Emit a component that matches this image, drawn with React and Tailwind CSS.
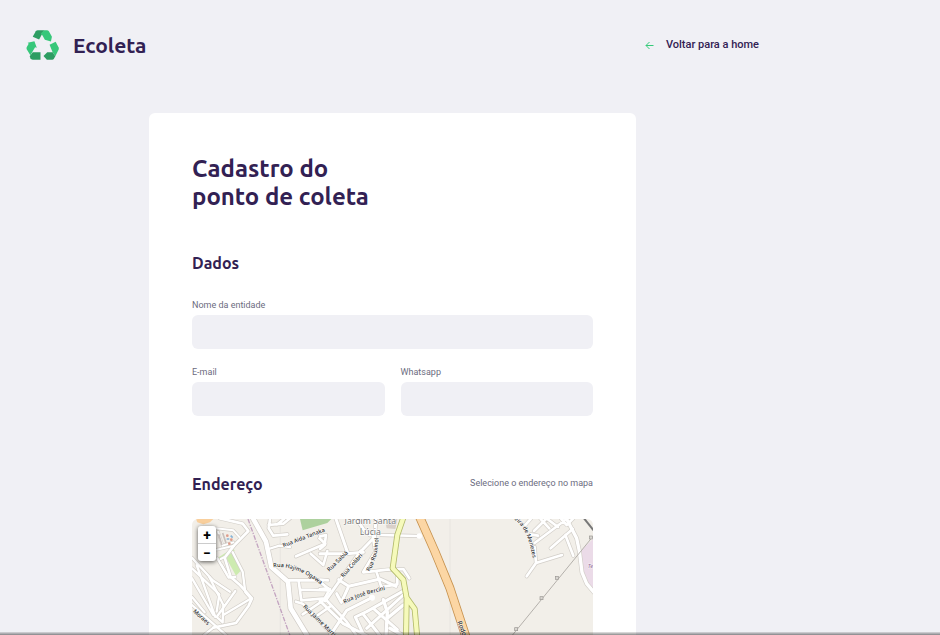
const casing = [
  // western district
  ["M90 10 L158 26 L175 48 L132 92 L104 128 L122 186 L150 210 L186 250 L176 272 L138 324 L70 338", 8],
  ["M128 112 L158 170 L166 232 L184 252", 7],
  ["M82 130 L116 188 L136 186", 7],
  ["M95 150 L110 176 M92 132 L104 126", 6],
  ["M78 40 L130 46 L148 66 M84 50 L98 92 L130 82 M80 104 L132 92", 6],
  ["M6 128 L68 196 L120 230 M6 160 L88 238 L80 290 M20 150 L76 306 M6 190 L70 300 M6 246 L44 292", 7],
  ["M58 186 L100 270 M136 228 L80 306 L98 322 M184 250 L100 300 M100 270 L98 322 M6 270 L110 362 M70 338 L40 362", 7],
  // centre
  ["M240 12 L236 40 L250 62 L292 58 M236 30 L280 26 L300 10 M262 28 L282 12", 8],
  ["M236 102 L268 92 L300 96", 7],
  ["M318 124 L406 86 L388 70 M362 116 L400 150 L412 108", 8],
  ["M292 196 L400 196 M326 198 L334 256 L404 250 L420 222 M330 224 L420 226 M390 200 L416 222", 8],
  ["M318 260 L338 266 L430 362 M338 298 L406 252 L470 320 L500 362 M384 300 L424 272", 8],
  ["M390 116 L470 116 L520 112 M474 116 L438 12 M510 112 L554 66 L558 12 M500 12 L524 48 L540 60", 9],
  ["M512 108 L406 258 M446 194 L476 214 L570 192 L618 214 M476 214 L454 262 L440 236", 9],
  ["M520 172 L592 164 L640 162 L658 190 M560 172 L574 216 L622 208 L622 184", 8],
  ["M548 62 L556 110 L520 170 M574 60 L680 63", 8],
  ["M390 64 L408 60 L404 90 L390 102 M390 194 L414 196 M390 222 L414 220", 8],
  ["M444 326 L470 286 L546 248 M390 258 L460 326 L530 362 M444 326 L420 362", 9],
  ["M496 306 L530 290 L640 228 M496 306 L522 362 M520 298 L570 362 M554 284 L622 344 M530 340 L640 240", 9],
  ["M580 254 L592 292 L588 362 M592 310 L640 270 M600 340 L640 362", 10],
  // east
  ["M1006 30 L1022 12 M1032 48 L1068 12 M1034 84 L1130 12 M1052 12 L1078 40 M1072 12 L1104 36 M1114 12 L1130 30 L1150 10", 8],
  ["M1082 100 L1148 42 M1126 60 L1150 122 M1022 58 L1044 62", 8],
  ["M1034 96 L1038 144 L1116 120 M1038 144 L1010 184", 8],
  ["M1130 12 L1160 70 L1168 108 L1176 172 L1190 206 L1212 232", 10],
];

const streetLabels = [
  { text: "Rua Aida Tanaka", path: "M281 97 Q340 74 420 44" },
  { text: "Rua Hajime Ogawa", path: "M250 157 Q320 150 396 212" },
  { text: "Rua Sabiá", path: "M418 170 L490 100" },
  { text: "Rua Colibri", path: "M460 188 L540 98" },
  { text: "Rua Rouxinol", path: "M538 170 Q566 130 566 50" },
  { text: "Rua José Bercini", path: "M464 266 Q520 236 620 218" },
  { text: "Rua Jaime Martins", path: "M338 276 L460 394" },
  { text: "Moraes", path: "M8 290 L80 356" },
  { text: "eira de Menezes", path: "M972 14 Q1020 44 1030 150" },
];

function StreetMap() {
  return (
    <svg
      className="block h-[260px] w-full"
      viewBox="6 12 1203 780"
      preserveAspectRatio="xMinYMin slice"
      role="img"
      aria-label="Mapa"
    >
      <rect x="6" y="12" width="1203" height="780" fill="#f2efe9" />
      <path d="M18 12 H70 L60 22 L40 28 L22 22 Z" fill="#f9cf9c" />
      <path d="M330 12 H424 L412 24 L338 46 Z" fill="#add19e" />
      <path d="M108 128 L130 108 L154 166 L138 182 Z" fill="#cdebb0" />
      <path d="M78 132 L130 98 L134 108 L84 136 Z" fill="#cdebb0" />
      <path d="M1209 72 L1172 108 L1176 170 L1209 232 Z" fill="#ebdbe8" />
      <path d="M588 30 L596 12 L622 12 L616 42 L590 40 Z" fill="#d9d0c9" />
      <path d="M271 12 V362 M780 12 V362" stroke="#e4e1dc" strokeWidth="2" />
      <path d="M174 12 L300 362" fill="none" stroke="#c3a4c0" strokeWidth="4" strokeDasharray="14 4 4 4" />
      <g fill="none" strokeLinecap="round" strokeLinejoin="round">
        <path d="M190 12 L228 80 L244 156 L294 200 L302 280 L352 362" stroke="#d0ccc6" strokeWidth="18" />
        {casing.map(([d, width]) => (
          <path key={d} d={d} stroke="#d2cec8" strokeWidth={width + 4} />
        ))}
        {casing.map(([d, width]) => (
          <path key={d} d={d} stroke="#ffffff" strokeWidth={width} />
        ))}
        <path d="M190 12 L228 80 L244 156 L294 200 L302 280 L352 362" stroke="#ffffff" strokeWidth="14" />
      </g>
      <circle cx="688" cy="63" r="8" fill="#ffffff" />
      <circle cx="546" cy="248" r="9" fill="#ffffff" />
      <path d="M86 58 L96 90 M98 54 L108 84" stroke="#c9c0bc" strokeWidth="5" />
      <g fill="none" strokeLinejoin="round">
        <path d="M640 8 L622 60 L608 160 L640 194 L650 250 L648 370 M650 248 L674 282 L682 370" stroke="#b3bb6c" strokeWidth="18" />
        <path d="M640 8 L622 60 L608 160 L640 194 L650 250 L648 370 M650 248 L674 282 L682 370" stroke="#f6fabb" strokeWidth="13" />
        <path d="M688 4 L734 108 L780 220 L830 372" stroke="#c79350" strokeWidth="27" />
        <path d="M688 4 L734 108 L780 220 L830 372" stroke="#fcd6a4" strokeWidth="22" />
        <path d="M966 362 L1209 64" stroke="#b4b0ab" strokeWidth="3" />
        <path d="M1182 10 L1212 48" stroke="#777777" strokeWidth="6" />
      </g>
      {[[978, 342], [1054, 249], [1100, 188], [1202, 67]].map(([x, y]) => (
        <rect key={x} x={x - 4} y={y - 4} width="9" height="9" fill="#d8d5d0" stroke="#9a9793" strokeWidth="2" />
      ))}
      <g fill="#df9c8a">
        <circle cx="112" cy="62" r="4" />
        <circle cx="124" cy="74" r="4" />
        <circle cx="118" cy="86" r="4" />
      </g>
      <path d="M110 72 H118 M122 62 L128 68" stroke="#87b4d8" strokeWidth="5" />
      <g
        className="font-['Noto_Sans',sans-serif]"
        fontSize="17"
        fontWeight="500"
        fill="#222222"
        stroke="#ffffff"
        strokeWidth="2"
        paintOrder="stroke"
      >
        {streetLabels.map(({ text, path }, index) => (
          <g key={text}>
            <path id={`street-${index}`} d={path} fill="none" stroke="none" />
            <text>
              <textPath href={`#street-${index}`}>{text}</textPath>
            </text>
          </g>
        ))}
        <path id="highway" d="M802 320 L850 450" fill="none" stroke="none" />
        <text fontSize="19">
          <textPath href="#highway">Rodovia</textPath>
        </text>
        <text x="1193" y="159" fill="#98709a" fontStyle="italic">Te</text>
      </g>
      <g
        className="font-['Noto_Sans',sans-serif]"
        fontSize="26"
        fill="#777777"
        stroke="#ffffff"
        strokeWidth="3"
        paintOrder="stroke"
        textAnchor="middle"
      >
        <text x="541" y="26">Jardim Santa</text>
        <text x="541" y="61">Lúcia</text>
      </g>
    </svg>
  );
}

function Logo() {
  return (
    <svg className="h-[30px] w-[33px]" viewBox="0 0 98 89" aria-hidden="true">
      <path d="M20 20 L29 4 Q31 1 35 1 H54 L39 28 Z" fill="#2d9d62" />
      <path d="M54 1 H62 Q66 1 68 4 L77 20 L74 34 L56 29 L49 16 L44 10 Z" fill="#37c77a" />
      <path d="M5 38 L25 33 L32 53 L27 51 L13 75 L2 57 Q1 54 2 51 L8 41 Z" fill="#37c77a" />
      <path d="M20 66 H43 V88 H20 Q15 88 13 84 L11 78 Z" fill="#2d9d62" />
      <path d="M70 44 L88 35 L97 52 Q98 55 97 58 L87 78 L79 66 Z" fill="#37c77a" />
      <path d="M52 77 L63 66 H79 L87 78 L83 85 Q81 88 78 88 H62 Z" fill="#2d9d62" />
    </svg>
  );
}

function Field({ id, label, type = "text" }) {
  return (
    <div className="flex min-w-0 flex-1 flex-col gap-[3px]">
      <label htmlFor={id} className="text-[9px] leading-[14px] text-[#6c6c80]">
        {label}
      </label>
      <input id={id} name={id} type={type} className="h-[34px] w-full rounded-md bg-[#f0f0f5] px-4 text-xs text-[#6c6c80]" />
    </div>
  );
}

const heading = "font-['Ubuntu','Noto_Sans',sans-serif] font-bold text-[#322153]";

export default function App() {
  return (
    <div className="h-screen overflow-hidden bg-[#f0f0f5] font-['Roboto',sans-serif]">
      <div className="w-full max-w-[785px]">
        <header className="flex items-center justify-between px-[26px] pt-[29px]">
          <div className="flex items-center gap-[14px]">
            <Logo />
            <span className={`text-[21px] leading-8 ${heading}`}>Ecoleta</span>
          </div>
          <a href="/" className="flex items-center gap-3 text-[11px] font-medium text-[#322153]">
            <svg className="size-[9px]" viewBox="0 0 9 9" fill="none" stroke="#34cb79" aria-hidden="true">
              <path d="M8.5 4.5 H1 M4.5 1 L1 4.5 L4.5 8" />
            </svg>
            Voltar para a home
          </a>
        </header>

        <form className="mx-auto mt-[52px] max-w-[487px] rounded-md bg-white px-[43px] pt-[42px] pb-10">
          <h1 className={`text-2xl leading-7 ${heading}`}>
            Cadastro do
            <br />
            ponto de coleta
          </h1>

          <fieldset className="mt-10">
            <legend className={`text-base leading-6 ${heading}`}>Dados</legend>
            <div className="mt-[23px] flex">
              <Field id="name" label="Nome da entidade" />
            </div>
            <div className="mt-4 flex gap-4">
              <Field id="email" label="E-mail" type="email" />
              <Field id="whatsapp" label="Whatsapp" />
            </div>
          </fieldset>

          <section className="mt-14">
            <div className="flex items-center justify-between">
              <h2 className={`text-base leading-6 ${heading}`}>Endereço</h2>
              <span className="text-[9px] text-[#6c6c80]">Selecione o endereço no mapa</span>
            </div>
            <div className="relative mt-[23px] overflow-hidden rounded-md">
              <StreetMap />
              <div className="absolute top-[7px] left-[6px] flex flex-col overflow-hidden rounded-[3px] bg-white text-black shadow-[0_1px_4px_rgba(0,0,0,0.65)]">
                <button type="button" aria-label="Aumentar zoom" className="flex h-[18px] w-[18px] items-center justify-center border-b border-[#cccccc] text-sm font-bold">
                  +
                </button>
                <button type="button" aria-label="Diminuir zoom" className="flex h-[17px] w-[18px] items-center justify-center text-sm font-bold">
                  −
                </button>
              </div>
            </div>
          </section>
        </form>
      </div>
      <div className="pointer-events-none fixed inset-x-0 bottom-0 h-[3px] bg-linear-to-b from-black/10 to-black/45" />
    </div>
  );
}
